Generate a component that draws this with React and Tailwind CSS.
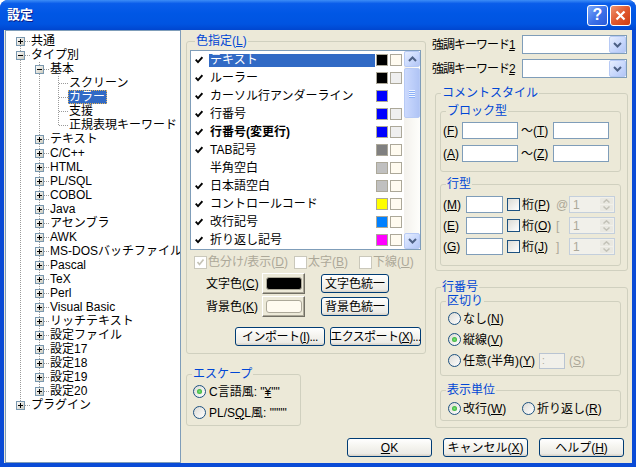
import React from 'react';

const U = ({ children }) => (
  <span className="underline decoration-1 underline-offset-[1px]">{children}</span>
);

function Group({ label, className = '', children }) {
  return (
    <fieldset className={`border border-[#D0D0BF] rounded-[3px] min-w-0 ${className}`}>
      <legend className="ml-[5px] px-[1px] text-[#0046D5] leading-[14px]">{label}</legend>
      {children}
    </fieldset>
  );
}

function Btn({ className = '', children }) {
  return (
    <div
      className={`border border-[#003C74] rounded-[3px] bg-[linear-gradient(180deg,#FFFFFF_0%,#F5F4EF_45%,#ECEBE6_85%,#D6D0C5_100%)] flex items-center justify-center whitespace-nowrap ${className}`}
    >
      {children}
    </div>
  );
}

function CB({ checked, disabled }) {
  return (
    <span
      className={`w-[13px] h-[13px] shrink-0 border flex items-center justify-center ${
        disabled ? 'border-[#CAC8BB] bg-white' : 'border-[#1C5180] bg-[linear-gradient(135deg,#DCDBD5,#FFFFFF)]'
      }`}
    >
      {checked && (
        <svg width="9" height="9" viewBox="0 0 9 9">
          <path d="M1.5 4 L3.5 6.5 L7.5 1.5" fill="none" stroke={disabled ? '#C5C3B6' : '#21A121'} strokeWidth="1.7" />
        </svg>
      )}
    </span>
  );
}

function Radio({ checked }) {
  return (
    <span className="w-[13px] h-[13px] shrink-0 rounded-full border border-[#1C5180] bg-[linear-gradient(135deg,#DCDBD5,#FFFFFF)] flex items-center justify-center">
      {checked && <span className="w-[5px] h-[5px] rounded-full bg-[radial-gradient(circle,#7BE07A,#1FA11F)]" />}
    </span>
  );
}

const LINE = '#9A9A9A';

function Guide() {
  return (
    <svg width="19" height="14" className="shrink-0" shapeRendering="crispEdges">
      <line x1="9.5" y1="0" x2="9.5" y2="14" stroke={LINE} strokeDasharray="1 1" />
    </svg>
  );
}

function Node({ first, last, box }) {
  return (
    <svg width="19" height="14" className="shrink-0" shapeRendering="crispEdges">
      <defs>
        <linearGradient id="tbg" x1="0" y1="0" x2="1" y2="1">
          <stop offset="0" stopColor="#FFFFFF" />
          <stop offset="1" stopColor="#C9C7BA" />
        </linearGradient>
      </defs>
      {!first && <line x1="9.5" y1="0" x2="9.5" y2="7" stroke={LINE} strokeDasharray="1 1" />}
      {!last && <line x1="9.5" y1="8" x2="9.5" y2="14" stroke={LINE} strokeDasharray="1 1" />}
      <line x1="10" y1="7.5" x2="19" y2="7.5" stroke={LINE} strokeDasharray="1 1" />
      {box && (
        <>
          <rect x="5.5" y="3.5" width="8" height="8" fill="url(#tbg)" stroke="#7A98AF" />
          <line x1="7" y1="7.5" x2="12" y2="7.5" stroke="#000" />
          {box === '+' && <line x1="9.5" y1="5" x2="9.5" y2="10" stroke="#000" />}
        </>
      )}
    </svg>
  );
}

const treeRows = [
  { d: 0, t: '共通', box: '+', first: true },
  { d: 0, t: 'タイプ別', box: '-' },
  { d: 1, t: '基本', box: '-' },
  { d: 2, t: 'スクリーン' },
  { d: 2, t: 'カラー', sel: true },
  { d: 2, t: '支援' },
  { d: 2, t: '正規表現キーワード', last: true },
  ...[
    'テキスト', 'C/C++', 'HTML', 'PL/SQL', 'COBOL', 'Java', 'アセンブラ', 'AWK', 'MS-DOSバッチファイル',
    'Pascal', 'TeX', 'Perl', 'Visual Basic', 'リッチテキスト', '設定ファイル', '設定17', '設定18', '設定19',
  ].map((t) => ({ d: 1, t, box: '+' })),
  { d: 1, t: '設定20', box: '+', last: true },
  { d: 0, t: 'プラグイン', box: '+', last: true },
];

function Tree() {
  return (
    <div className="w-[176px] h-full ml-[1px] shrink-0 border border-[#7F9DB9] bg-white pt-[3px] overflow-hidden">
      {treeRows.map((r, i) => (
        <div key={i} className="flex h-[14px] items-center">
          <div className="w-[5px] shrink-0" />
          {Array.from({ length: r.d }).map((_, k) => (
            <Guide key={k} />
          ))}
          <Node first={r.first} last={r.last} box={r.box} />
          <span
            className={`pl-[1px] pr-[2px] h-[14px] leading-[14px] whitespace-nowrap ${
              r.sel ? 'bg-[#316AC5] text-white outline-1 outline-dotted outline-[#E3B35C] -outline-offset-1' : ''
            }`}
          >
            {r.t}
          </span>
        </div>
      ))}
    </div>
  );
}

function TitleBar() {
  return (
    <div className="h-[30px] shrink-0 flex items-center pl-[7px] pr-[5px] bg-[linear-gradient(180deg,#3D8DF6_0%,#0A5DEA_12%,#0057E5_45%,#0054E1_80%,#0046CF_100%)]">
      <span className="text-white font-bold text-[13px] leading-[16px] [text-shadow:1px_1px_0_#0A1E8C]">設定</span>
      <div className="ml-auto flex gap-[2px]">
        <div className="w-[21px] h-[21px] rounded-[3px] border border-white bg-[linear-gradient(135deg,#7AA8FA_0%,#3B6FE8_55%,#2A5BDA_100%)] flex items-center justify-center text-white font-bold text-[16px] leading-[16px] font-['Liberation_Sans',sans-serif]">
          ?
        </div>
        <div className="w-[21px] h-[21px] rounded-[3px] border border-white bg-[linear-gradient(135deg,#EE9571_0%,#E0582E_50%,#CC3D12_100%)] flex items-center justify-center">
          <svg width="11" height="11" viewBox="0 0 11 11">
            <path d="M1.5 1.5 L9.5 9.5 M9.5 1.5 L1.5 9.5" stroke="#fff" strokeWidth="2.2" />
          </svg>
        </div>
      </div>
    </div>
  );
}

function ScrollBtn({ down }) {
  return (
    <div className="h-[16px] shrink-0 rounded-[2px] border border-[#B7CAF5] bg-[linear-gradient(135deg,#E6EEFE_0%,#C6D6FC_60%,#B3C6F5_100%)] flex items-center justify-center">
      <svg width="9" height="6" viewBox="0 0 9 6">
        <path d={down ? 'M1 1 L4.5 4.5 L8 1' : 'M1 5 L4.5 1.5 L8 5'} fill="none" stroke="#4D6185" strokeWidth="2" />
      </svg>
    </div>
  );
}

function Scrollbar() {
  return (
    <div className="w-[16px] h-full flex flex-col bg-[linear-gradient(90deg,#F3F1EC,#FEFEFB)]">
      <ScrollBtn />
      <div className="mt-[1px] h-[50px] rounded-[2px] border border-[#B7CAF5] bg-[linear-gradient(90deg,#CBD9FD_0%,#BBCDF9_60%,#B0C4F5_100%)] flex flex-col items-center justify-center gap-[1px]">
        {[0, 1, 2, 3].map((i) => (
          <div key={i} className="w-[6px] h-[1px] bg-[#EEF4FE] shadow-[0_1px_0_#8CB0F8]" />
        ))}
      </div>
      <div className="flex-1" />
      <ScrollBtn down />
    </div>
  );
}

const colorRows = [
  { t: 'テキスト', c: true, fg: '#000000', bg: '#FFFBF0', sel: true },
  { t: 'ルーラー', c: true, fg: '#000000', bg: '#EFEFEF' },
  { t: 'カーソル行アンダーライン', c: true, fg: '#0000FF', bg: null },
  { t: '行番号', c: true, fg: '#0000FF', bg: '#EFEFEF' },
  { t: '行番号(変更行)', c: true, fg: '#0000FF', bg: '#EFEFEF', bold: true },
  { t: 'TAB記号', c: true, fg: '#808080', bg: '#FFFBF0' },
  { t: '半角空白', c: false, fg: '#C0C0C0', bg: '#FFFBF0' },
  { t: '日本語空白', c: true, fg: '#C0C0C0', bg: '#FFFBF0' },
  { t: 'コントロールコード', c: true, fg: '#FFFF00', bg: '#FFFBF0' },
  { t: '改行記号', c: true, fg: '#0080FF', bg: '#FFFBF0' },
  { t: '折り返し記号', c: true, fg: '#FF00FF', bg: '#FFFBF0' },
];

function ColorList() {
  return (
    <div className="mt-[2px] w-[231px] h-[200px] border border-[#7F9DB9] bg-white flex">
      <div className="w-[213px] flex flex-col">
        {colorRows.map((r, i) => (
          <div key={i} className="h-[18px] shrink-0 flex items-center">
            <span className="w-[4px] shrink-0" />
            <span className="w-[8px] h-[8px] shrink-0 flex">
              {r.c && (
                <svg width="8" height="8" viewBox="0 0 8 8">
                  <path d="M0.7 3.6 L3 6.2 L7.4 1.2" fill="none" stroke="#000" strokeWidth="1.8" />
                </svg>
              )}
            </span>
            <span
              className={`ml-[6px] w-[166px] shrink-0 h-[13px] pl-[1px] leading-[13px] whitespace-nowrap ${
                r.sel ? 'bg-[#316AC5] text-white' : ''
              } ${r.bold ? 'font-bold' : ''}`}
            >
              {r.t}
            </span>
            <span className="ml-[1px] w-[12px] h-[12px] shrink-0 border border-[#ACA899]" style={{ background: r.fg }} />
            {r.bg ? (
              <span className="ml-[2px] w-[12px] h-[12px] shrink-0 border border-[#ACA899]" style={{ background: r.bg }} />
            ) : (
              <span className="ml-[2px] w-[12px] h-[12px] shrink-0" />
            )}
          </div>
        ))}
      </div>
      <Scrollbar />
    </div>
  );
}

function ColorBtn({ color }) {
  return (
    <div className="w-[43px] h-[21px] shrink-0 border border-t-white border-l-white border-r-[#716F64] border-b-[#716F64] bg-[#ECE9D8] shadow-[inset_-1px_-1px_0_#ACA899] flex items-center justify-center">
      <div className="w-[36px] h-[13px] rounded-[3px] border border-[#ACA899]" style={{ background: color }} />
    </div>
  );
}

function Middle() {
  return (
    <div className="w-[240px] shrink-0 flex flex-col">
      <Group
        label={
          <>
            色指定(<U>L</U>)
          </>
        }
        className="mt-[4px] h-[320px] pl-[3px]"
      >
        <ColorList />
        <div className="mt-[5px] h-[14px] flex items-center text-[#ACA899]">
          <div className="w-[104px] pl-[4px] flex items-center gap-[1px] shrink-0">
            <CB checked disabled />
            <span className="whitespace-nowrap">
              色分け/表示(<U>D</U>)
            </span>
          </div>
          <div className="w-[65px] flex items-center gap-[1px] shrink-0">
            <CB disabled />
            <span className="whitespace-nowrap">
              太字(<U>B</U>)
            </span>
          </div>
          <div className="flex items-center gap-[1px] shrink-0">
            <CB disabled />
            <span className="whitespace-nowrap">
              下線(<U>U</U>)
            </span>
          </div>
        </div>
        <div className="mt-[4px] h-[21px] flex items-center pl-[16px]">
          <span className="w-[56px] shrink-0 whitespace-nowrap">
            文字色(<U>C</U>)
          </span>
          <ColorBtn color="#000000" />
          <Btn className="ml-[16px] w-[68px] h-[19px]">文字色統一</Btn>
        </div>
        <div className="mt-[2px] h-[21px] flex items-center pl-[16px]">
          <span className="w-[56px] shrink-0 whitespace-nowrap">
            背景色(<U>K</U>)
          </span>
          <ColorBtn color="#FFFBF0" />
          <Btn className="ml-[16px] w-[68px] h-[19px]">背景色統一</Btn>
        </div>
        <div className="mt-[10px] h-[19px] flex items-center pl-[45px] gap-[5px]">
          <Btn className="w-[90px] h-[19px] tracking-[-0.5px]">
            インポート(<U>I</U>)...
          </Btn>
          <Btn className="w-[91px] h-[19px] tracking-[-0.6px]">
            エクスポート(<U>X</U>)...
          </Btn>
        </div>
      </Group>
      <Group label="エスケープ" className="mt-[13px] w-[115px] h-[59px]">
        <div className="mt-[2px] h-[17px] flex items-center pl-[6px] gap-[3px]">
          <Radio checked />
          <span className="whitespace-nowrap">
            C言語風: "<U>¥</U>""
          </span>
        </div>
        <div className="mt-[4px] h-[17px] flex items-center pl-[6px] gap-[3px]">
          <Radio />
          <span className="whitespace-nowrap">
            PL/S<U>Q</U>L風: """"
          </span>
        </div>
      </Group>
    </div>
  );
}

function Combo() {
  return (
    <div className="w-[105px] h-[19px] shrink-0 border border-[#7F9DB9] bg-white flex justify-end">
      <div className="w-[17px] h-full rounded-[2px] border border-[#B7CAF5] bg-[linear-gradient(135deg,#E6EEFE_0%,#C6D6FC_60%,#B3C6F5_100%)] flex items-center justify-center">
        <svg width="9" height="6" viewBox="0 0 9 6">
          <path d="M1 1 L4.5 4.5 L8 1" fill="none" stroke="#4D6185" strokeWidth="2" />
        </svg>
      </div>
    </div>
  );
}

function Edit({ className = '' }) {
  return <div className={`h-[17px] shrink-0 border border-[#7F9DB9] bg-white ${className}`} />;
}

function Spin() {
  return (
    <div className="w-[46px] h-[17px] shrink-0 border border-[#C4CFDC] bg-[#F1F0EA] flex items-center">
      <span className="pl-[3px] flex-1 text-[#ACA899]">1</span>
      <div className="w-[15px] h-full flex flex-col p-[1px] gap-[1px]">
        <div className="flex-1 rounded-[1px] bg-[#E9E8E1] flex items-center justify-center">
          <svg width="7" height="4" viewBox="0 0 7 4">
            <path d="M0.5 3.5 L3.5 0.8 L6.5 3.5" fill="none" stroke="#C3C2B8" strokeWidth="1.5" />
          </svg>
        </div>
        <div className="flex-1 rounded-[1px] bg-[#E9E8E1] flex items-center justify-center">
          <svg width="7" height="4" viewBox="0 0 7 4">
            <path d="M0.5 0.5 L3.5 3.2 L6.5 0.5" fill="none" stroke="#C3C2B8" strokeWidth="1.5" />
          </svg>
        </div>
      </div>
    </div>
  );
}

function LineRow({ k, p, sym, mt }) {
  return (
    <div className={`h-[17px] flex items-center pl-[2px] ${mt}`}>
      <span className="w-[23px] shrink-0">
        (<U>{k}</U>)
      </span>
      <Edit className="w-[37px]" />
      <span className="ml-[4px]">
        <CB />
      </span>
      <span className="ml-[2px] w-[34px] shrink-0 whitespace-nowrap">
        桁(<U>{p}</U>)
      </span>
      <span className="w-[13px] shrink-0 text-[#ACA899]">{sym}</span>
      <Spin />
    </div>
  );
}

function Right() {
  return (
    <div className="w-[196px] ml-[6px] shrink-0 flex flex-col">
      <div className="mt-[5px] h-[19px] flex items-center">
        <span className="w-[90px] shrink-0 whitespace-nowrap tracking-[-1px]">
          強調キーワード<U>1</U>
        </span>
        <Combo />
      </div>
      <div className="mt-[5px] h-[19px] flex items-center">
        <span className="w-[90px] shrink-0 whitespace-nowrap tracking-[-1px]">
          強調キーワード<U>2</U>
        </span>
        <Combo />
      </div>
      <Group label="コメントスタイル" className="mt-[8px] ml-[3px] w-[193px] h-[185px]">
        <Group label="ブロック型" className="mt-[4px] ml-[4px] w-[181px] h-[68px]">
          <div className="mt-[4px] h-[17px] flex items-center pl-[2px]">
            <span className="w-[19px] shrink-0">
              (<U>F</U>)
            </span>
            <Edit className="w-[56px]" />
            <span className="ml-[3px] w-[32px] shrink-0 whitespace-nowrap">
              ～(<U>T</U>)
            </span>
            <Edit className="w-[56px]" />
          </div>
          <div className="mt-[6px] h-[17px] flex items-center pl-[2px]">
            <span className="w-[19px] shrink-0">
              (<U>A</U>)
            </span>
            <Edit className="w-[56px]" />
            <span className="ml-[3px] w-[32px] shrink-0 whitespace-nowrap">
              ～(<U>Z</U>)
            </span>
            <Edit className="w-[56px]" />
          </div>
        </Group>
        <Group label="行型" className="mt-[5px] ml-[4px] w-[181px] h-[89px]">
          <LineRow k="M" p="P" sym="@" mt="mt-[5px]" />
          <LineRow k="E" p="O" sym="[" mt="mt-[4px]" />
          <LineRow k="G" p="J" sym="]" mt="mt-[4px]" />
        </Group>
      </Group>
      <Group label="行番号" className="mt-[9px] ml-[3px] w-[193px] h-[148px]">
        <Group label="区切り" className="ml-[4px] w-[181px] h-[82px]">
          <div className="mt-[2px] h-[17px] flex items-center pl-[7px] gap-[2px]">
            <Radio />
            <span>
              なし(<U>N</U>)
            </span>
          </div>
          <div className="mt-[4px] h-[17px] flex items-center pl-[7px] gap-[2px]">
            <Radio checked />
            <span>
              縦線(<U>V</U>)
            </span>
          </div>
          <div className="mt-[4px] h-[17px] flex items-center pl-[7px] gap-[2px]">
            <Radio />
            <span className="w-[74px] shrink-0 whitespace-nowrap">
              任意(半角)(<U>Y</U>)
            </span>
            <div className="w-[26px] h-[16px] shrink-0 border border-[#B9C4D2] bg-[#F1F0EA] text-[#ACA899] pl-[2px] text-[10px] leading-[14px]">
              :
            </div>
            <span className="ml-[2px] text-[#ACA899]">
              (<U>S</U>)
            </span>
          </div>
        </Group>
        <Group label="表示単位" className="mt-[7px] ml-[4px] w-[181px] h-[38px]">
          <div className="mt-[3px] h-[17px] flex items-center pl-[7px]">
            <div className="w-[74px] shrink-0 flex items-center gap-[2px]">
              <Radio checked />
              <span className="whitespace-nowrap">
                改行(<U>W</U>)
              </span>
            </div>
            <div className="flex items-center gap-[2px]">
              <Radio />
              <span className="whitespace-nowrap">
                折り返し(<U>R</U>)
              </span>
            </div>
          </div>
        </Group>
      </Group>
    </div>
  );
}

export default function App() {
  return (
    <div className="w-[636px] h-[467px] flex flex-col bg-[#0A4BD6] rounded-t-[8px] overflow-hidden font-['Liberation_Sans','Noto_Sans_CJK_JP',sans-serif] text-[12px] leading-[14px] text-black select-none">
      <TitleBar />
      <div className="flex-1 min-h-0 mx-[4px] mb-[4px] bg-[#ECE9D8] flex">
        <Tree />
        <div className="flex-1 ml-[5px] flex flex-col min-w-0">
          <div className="h-[408px] shrink-0 flex items-start">
            <Middle />
            <Right />
          </div>
          <div className="h-[19px] flex justify-end gap-[11px] pr-[8px]">
            <Btn className="w-[85px] h-[19px]">
              <U>O</U>K
            </Btn>
            <Btn className="w-[85px] h-[19px]">
              キャンセル(<U>X</U>)
            </Btn>
            <Btn className="w-[85px] h-[19px]">
              ヘルプ(<U>H</U>)
            </Btn>
          </div>
        </div>
      </div>
    </div>
  );
}
